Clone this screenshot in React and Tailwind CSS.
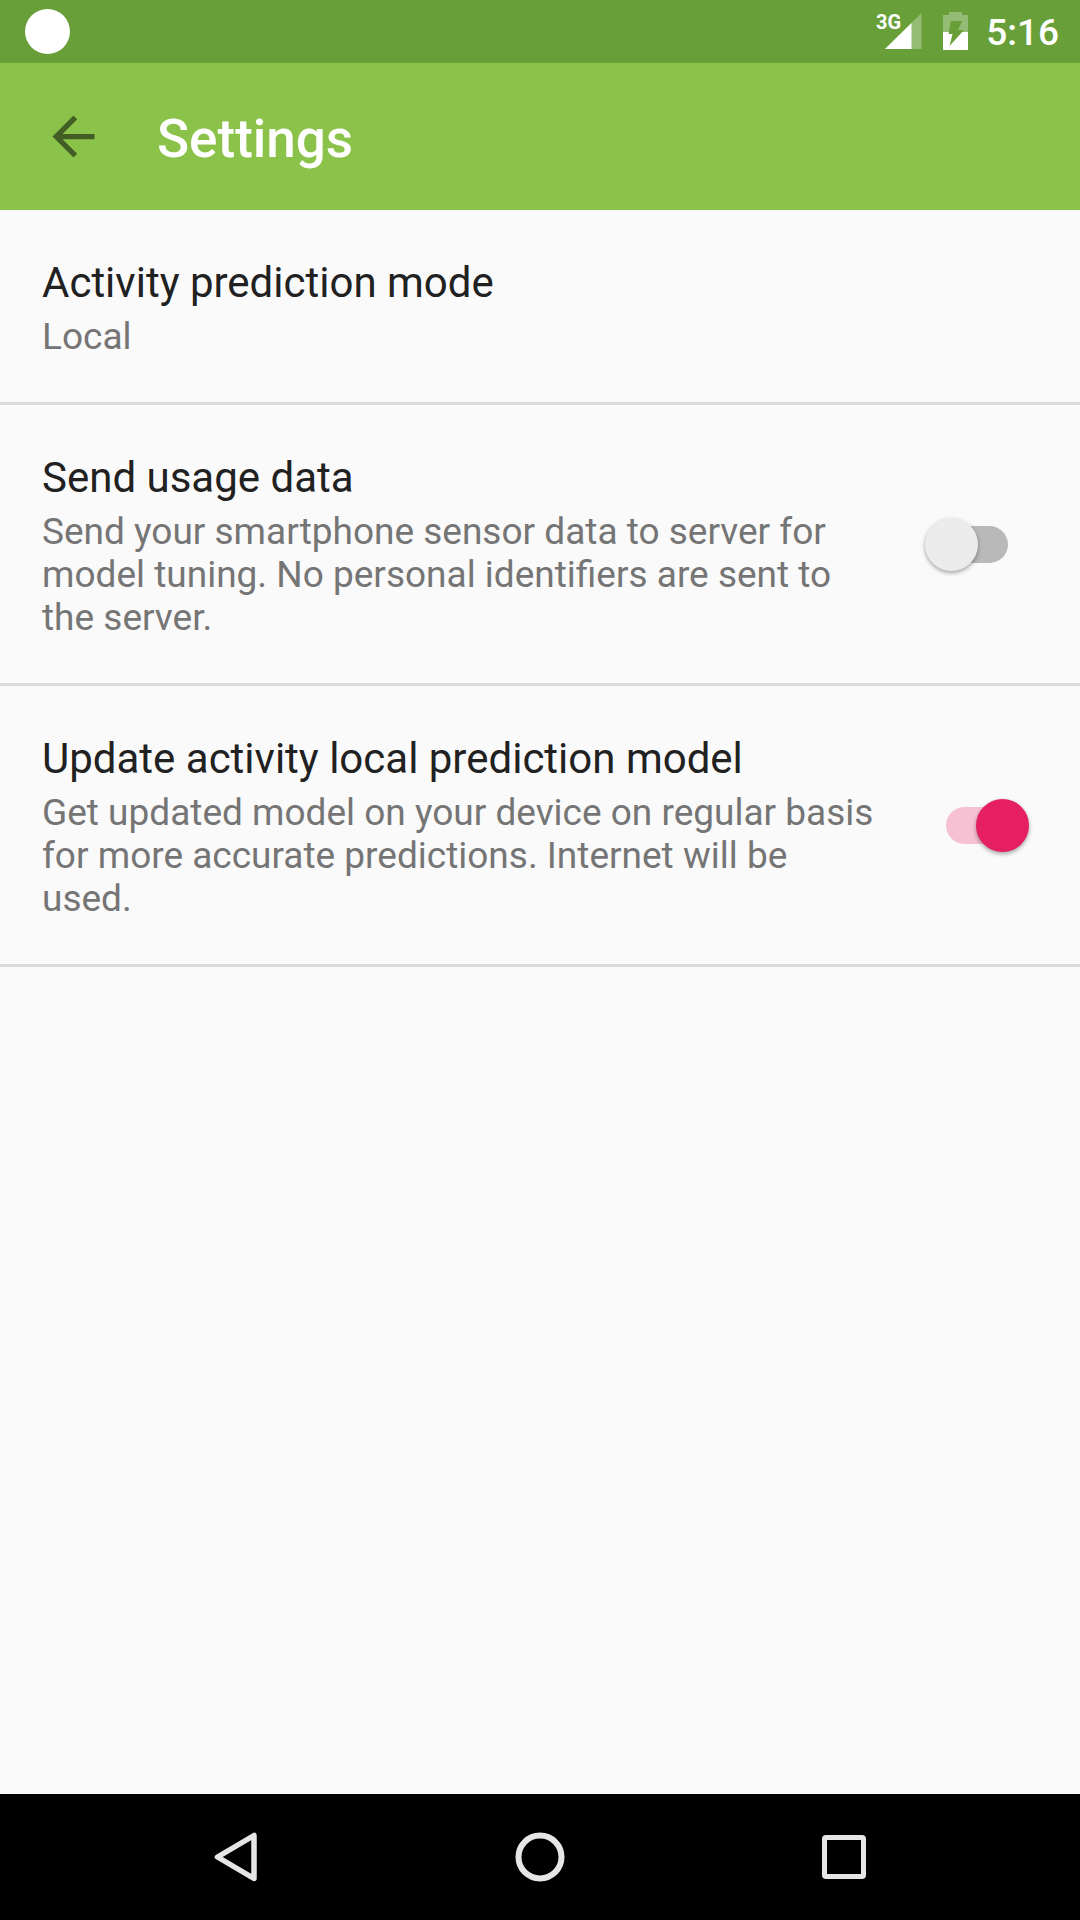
import { useState } from "react";

function StatusBar() {
  return (
    <div className="flex h-[63px] shrink-0 items-center justify-between bg-[#689f38] pl-[25px] pr-[21px] text-white">
      <span className="mb-px size-[45px] rounded-full bg-white" />
      <div className="flex items-center">
        <svg className="h-[51px] w-[52px]" viewBox="0 -6 52 51" role="img" aria-label="3G signal">
          <path d="M51.500 1V37H15Z" fill="#fff" fillOpacity="0.3" />
          <path d="M41.500 11V37H15Z" fill="#fff" />
          <text x="6" y="17" fill="#fff" fontFamily="Roboto" fontWeight="700" fontSize="20">3G</text>
        </svg>
        <svg className="ml-[21px] h-[39px] w-[25px]" viewBox="0 0 25 39" role="img" aria-label="Battery charging">
          <clipPath id="battery">
            <path
              clipRule="evenodd"
              d="M6 0H19V3H25V38H0V3H6ZM8 9L5.500 22H9.500L6.500 34L21 18H15L19 9Z"
            />
          </clipPath>
          <g clipPath="url(#battery)" fill="#fff">
            <rect width="25" height="20" fillOpacity="0.3" />
            <rect y="20" width="25" height="18" />
          </g>
        </svg>
        <span className="ml-[18px] pt-0.5 text-[37px] leading-[43px] font-medium">5:16</span>
      </div>
    </div>
  );
}

function Setting({ title, children, id, initial }) {
  const [on, setOn] = useState(initial);
  const isSwitch = initial !== undefined;
  const text = (
    <>
      <span className="block text-[42px] leading-[52px] text-[#212121]">{title}</span>
      <span className="mt-1.5 block text-[37px] leading-[43px] text-[#757575]">{children}</span>
    </>
  );
  const row = "flex w-full items-center border-b-3 border-[#dadada] py-11 pr-[51px] pl-[42px] text-left";
  if (!isSwitch) {
    return (
      <button type="button" className={row}>
        <span className="min-w-0 flex-1 pt-[3px]">{text}</span>
      </button>
    );
  }
  return (
    <label htmlFor={id} className={row}>
      <span className="min-w-0 flex-1 pt-[3px] pr-12">{text}</span>
      <span className="relative flex h-[53px] w-[104px] shrink-0 items-center justify-center">
        <input
          id={id}
          type="checkbox"
          role="switch"
          checked={on}
          onChange={(e) => setOn(e.target.checked)}
          className="peer h-[37px] w-[62px] appearance-none rounded-full bg-[#b9b9b9] checked:bg-[#f6c1d3]"
        />
        <span className="pointer-events-none absolute left-0 size-[53px] rounded-full bg-[#ececec] shadow-[0_2px_4px_rgba(0,0,0,0.35)] peer-checked:right-0 peer-checked:left-auto peer-checked:bg-[#e61e62]" />
      </span>
    </label>
  );
}

export default function App() {
  return (
    <div className="flex min-h-screen flex-col bg-[#fafafa] font-['Roboto',sans-serif]">
      <StatusBar />
      <header className="flex h-[147px] shrink-0 items-center bg-[#8bc34a] pl-[42px]">
        <button type="button" aria-label="Back">
          <svg className="size-[63px]" viewBox="0 0 24 24" fill="#435e24">
            <path d="M20 11H7.830l5.590-5.590L12 4l-8 8 8 8 1.410-1.410L7.830 13H20v-2z" />
          </svg>
        </button>
        <h1 className="ml-[52px] pt-1 text-[53px] leading-[62px] font-medium text-white">Settings</h1>
      </header>
      <main className="flex-1">
        <Setting title="Activity prediction mode">Local</Setting>
        <Setting id="usage" title="Send usage data" initial={false}>
          Send your smartphone sensor data to server for model tuning. No personal identifiers are sent to the server.
        </Setting>
        <Setting id="update" title="Update activity local prediction model" initial={true}>
          Get updated model on your device on regular basis for more accurate predictions. Internet will be used.
        </Setting>
      </main>
      <nav className="flex h-[126px] shrink-0 items-center justify-center gap-[220px] bg-black">
        <button type="button" aria-label="Back">
          <svg className="size-[84px]" viewBox="0 0 84 84" fill="none" stroke="#e6e6e6" strokeWidth="5.500" strokeLinejoin="round">
            <path d="M60 20.500V63.500L23.500 42Z" />
          </svg>
        </button>
        <button type="button" aria-label="Home">
          <svg className="size-[84px]" viewBox="0 0 84 84" fill="none" stroke="#e6e6e6" strokeWidth="6">
            <circle cx="42" cy="42" r="21.500" />
          </svg>
        </button>
        <button type="button" aria-label="Recent apps">
          <svg className="size-[84px]" viewBox="0 0 84 84" fill="none" stroke="#e6e6e6" strokeWidth="5">
            <rect x="22.500" y="22.500" width="39" height="39" rx="1.500" />
          </svg>
        </button>
      </nav>
    </div>
  );
}
